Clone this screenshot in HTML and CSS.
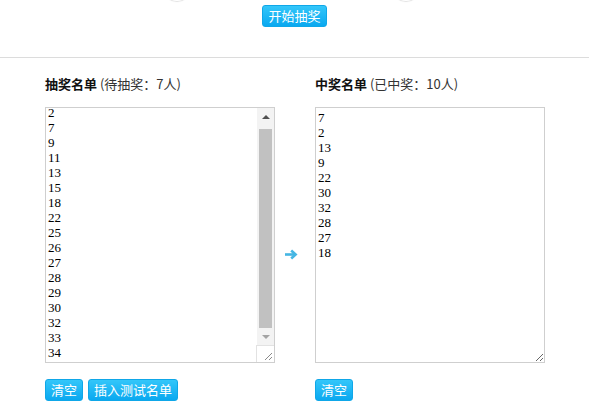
FILE: index.html
```html
<!DOCTYPE html>
<html lang="zh-CN">
<head>
<meta charset="utf-8">
<title>抽奖</title>
<link rel="stylesheet" href="styles.css">
</head>
<body>
<div class="stage">
  <span class="ball ball-left"></span>
  <span class="ball ball-right"></span>
  <button class="btn">开始抽奖</button>
</div>
<div class="lists">
  <div class="col">
    <h3 class="title"><b>抽奖名单</b> (待抽奖：7人)</h3>
    <div class="field">
      <textarea class="box pool">2
7
9
11
13
15
18
22
25
26
27
28
29
30
32
33
34</textarea>
      <div class="vscroll" aria-hidden="true">
        <div class="sb-btn"><span class="tri-up"></span></div>
        <div class="sb-track"><div class="sb-thumb"></div></div>
        <div class="sb-btn"><span class="tri-down"></span></div>
        <div class="sb-corner">
          <svg width="16" height="16" viewBox="0 0 16 16">
            <path d="M7 14L14 7M11 14L14 11" stroke="#8a8a8a" stroke-width="1" fill="none"/>
          </svg>
        </div>
      </div>
    </div>
    <div class="actions">
      <button class="btn">清空</button>
      <button class="btn">插入测试名单</button>
    </div>
  </div>
  <div class="mid">
    <svg class="arrow" width="14" height="11" viewBox="0 0 14 11">
      <path d="M1 5.5H11" stroke="#45b6e3" stroke-width="2.6" fill="none"/>
      <path d="M7.2 1.5L11.6 5.5L7.2 9.5" stroke="#45b6e3" stroke-width="2.6" fill="none"/>
    </svg>
  </div>
  <div class="col">
    <h3 class="title"><b>中奖名单</b> (已中奖：10人)</h3>
    <textarea class="box winners">7
2
13
9
22
30
32
28
27
18</textarea>
    <div class="actions">
      <button class="btn">清空</button>
    </div>
  </div>
</div>
<script src="script.js"></script>
</body>
</html>
```

FILE: styles.css
```css
html, body {
  margin: 0;
  padding: 0;
  background: #fff;
}

body {
  font-family: "Noto Sans CJK SC", "Liberation Sans", sans-serif;
  font-size: 13px;
  color: #333;
}

.stage {
  height: 58px;
  border-bottom: 1px solid #dcdcdc;
  display: flex;
  justify-content: center;
  align-items: flex-start;
  padding-top: 5px;
  box-sizing: border-box;
  position: relative;
  overflow: hidden;
}

.ball {
  position: absolute;
  top: -31px;
  width: 30px;
  height: 32px;
  border-radius: 50%;
  box-shadow: 0 1px 1px rgba(0, 0, 0, 0.12);
}

.ball-left { left: 162px; }
.ball-right { left: 391px; }

.btn {
  height: 22px;
  padding: 0 5px;
  margin: 0;
  border: 1px solid #0fa7e8;
  border-radius: 3px;
  background: linear-gradient(#33c6fa, #0aa8f0);
  color: #fff;
  font-family: "Noto Sans CJK SC", sans-serif;
  font-size: 13px;
  line-height: 20px;
  cursor: pointer;
}

.lists {
  display: flex;
  padding: 16px 0 0 45px;
}

.col {
  width: 230px;
  display: flex;
  flex-direction: column;
}

.mid {
  width: 40px;
  padding-top: 175px;
  display: flex;
  justify-content: center;
}

.arrow {
  display: block;
  margin-left: -9px;
}

.title {
  margin: 0 0 13px;
  height: 20px;
  font-size: 13px;
  line-height: 20px;
  font-weight: normal;
  color: #333;
  white-space: nowrap;
}

.title b {
  color: #111;
  font-weight: bold;
}

.field {
  position: relative;
  width: 230px;
  height: 256px;
}

.box {
  display: block;
  width: 230px;
  height: 256px;
  margin: 0;
  box-sizing: border-box;
  border: 1px solid #cfcfcf;
  padding: 2px;
  font-family: "Liberation Serif", serif;
  font-size: 13px;
  line-height: 15px;
  color: #000;
  resize: both;
  outline: none;
}

.pool {
  overflow-y: scroll;
  padding-right: 19px;
  resize: none;
}

.winners {
  overflow-y: auto;
}

.vscroll {
  position: absolute;
  top: 1px;
  right: 1px;
  bottom: 1px;
  width: 17px;
  display: flex;
  flex-direction: column;
  background: #f3f3f3;
}

.sb-btn {
  height: 17px;
  display: flex;
  align-items: center;
  justify-content: center;
}

.tri-up {
  width: 0;
  height: 0;
  border-left: 4px solid transparent;
  border-right: 4px solid transparent;
  border-bottom: 4px solid #505050;
}

.tri-down {
  width: 0;
  height: 0;
  border-left: 4px solid transparent;
  border-right: 4px solid transparent;
  border-top: 4px solid #a3a3a3;
}

.sb-track {
  flex: 1;
  padding: 4px 2px 0;
  display: flex;
}

.sb-thumb {
  flex: 1;
  background: #c1c1c1;
}

.sb-corner {
  height: 16px;
  border-top: 1px solid #e2e2e2;
  border-left: 1px solid #e2e2e2;
  margin-left: -1px;
  background: #fff;
  display: flex;
  justify-content: flex-end;
  align-items: flex-end;
}

.sb-corner svg {
  display: block;
}

.actions {
  display: flex;
  gap: 5px;
  margin-top: 16px;
}
```

FILE: script.js
```js
var pool = document.querySelector('.pool');
pool.scrollTop = pool.scrollHeight;
```
